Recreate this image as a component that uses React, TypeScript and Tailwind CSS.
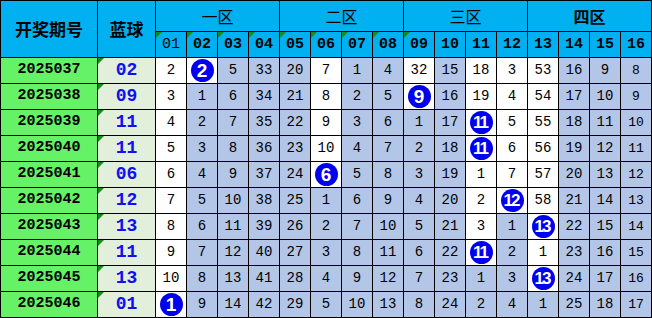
import React from "react";

type Cell = number | { b: number };

const rows: { id: string; blue: string; cells: Cell[] }[] = [
  { id: "2025037", blue: "02", cells: [2, { b: 2 }, 5, 33, 20, 7, 1, 4, 32, 15, 18, 3, 53, 16, 9, 8] },
  { id: "2025038", blue: "09", cells: [3, 1, 6, 34, 21, 8, 2, 5, { b: 9 }, 16, 19, 4, 54, 17, 10, 9] },
  { id: "2025039", blue: "11", cells: [4, 2, 7, 35, 22, 9, 3, 6, 1, 17, { b: 11 }, 5, 55, 18, 11, 10] },
  { id: "2025040", blue: "11", cells: [5, 3, 8, 36, 23, 10, 4, 7, 2, 18, { b: 11 }, 6, 56, 19, 12, 11] },
  { id: "2025041", blue: "06", cells: [6, 4, 9, 37, 24, { b: 6 }, 5, 8, 3, 19, 1, 7, 57, 20, 13, 12] },
  { id: "2025042", blue: "12", cells: [7, 5, 10, 38, 25, 1, 6, 9, 4, 20, 2, { b: 12 }, 58, 21, 14, 13] },
  { id: "2025043", blue: "13", cells: [8, 6, 11, 39, 26, 2, 7, 10, 5, 21, 3, 1, { b: 13 }, 22, 15, 14] },
  { id: "2025044", blue: "11", cells: [9, 7, 12, 40, 27, 3, 8, 11, 6, 22, { b: 11 }, 2, 1, 23, 16, 15] },
  { id: "2025045", blue: "13", cells: [10, 8, 13, 41, 28, 4, 9, 12, 7, 23, 1, 3, { b: 13 }, 24, 17, 16] },
  { id: "2025046", blue: "01", cells: [{ b: 1 }, 9, 14, 42, 29, 5, 10, 13, 8, 24, 2, 4, 1, 25, 18, 17] },
];

const lastBall: number[] = Array.from({ length: 16 }, (_, c) => {
  let last = -1;
  rows.forEach((r, i) => {
    if (typeof r.cells[c] === "object") last = i;
  });
  return last;
});

function Tri() {
  return (
    <span className="absolute left-0 top-0 h-0 w-0 border-r-[6px] border-t-[6px] border-r-transparent border-t-[#198c19]" />
  );
}

function Ball({ n }: { n: number }) {
  const two = n >= 10;
  return (
    <div
      className={
        "flex h-[23px] w-[23px] items-center justify-center rounded-full bg-[#0000f0] font-['Liberation_Sans',Arial,sans-serif] font-bold leading-none text-white " +
        (two ? "pr-[2px] text-[17px] tracking-[-2px]" : "text-[19px]")
      }
    >
      {n}
    </div>
  );
}

export default function App() {
  const zones = ["一区", "二区", "三区", "四区"];
  return (
    <div className="h-[318px] w-[652px] overflow-hidden bg-white">
      <div className="grid grid-cols-[96px_57px_repeat(16,30px)] grid-rows-[30px_25px_repeat(10,25px)] gap-px bg-black p-px">
        <div className="row-span-2 flex items-center justify-center bg-[#00b0f0] font-['Noto_Sans_CJK_SC','Noto_Sans',sans-serif] text-[17px] font-bold text-black">
          开奖期号
        </div>
        <div className="row-span-2 flex items-center justify-center bg-[#00b0f0] font-['Noto_Sans_CJK_SC','Noto_Sans',sans-serif] text-[17px] font-bold text-black">
          蓝球
        </div>
        {zones.map((z, i) => (
          <div
            key={z}
            className={
              "col-span-4 flex items-center justify-center bg-[#00b0f0] font-['Noto_Sans_CJK_SC','Noto_Sans',sans-serif] text-[16px] text-black " +
              (i === 3 ? "font-bold" : "font-normal")
            }
          >
            {z}
          </div>
        ))}
        {Array.from({ length: 16 }, (_, i) => {
          const label = String(i + 1).padStart(2, "0");
          return (
            <div
              key={label}
              className={
                "relative flex items-center justify-center bg-[#00b0f0] pt-px font-['Liberation_Mono','DejaVu_Sans_Mono',monospace] text-[15px] text-black " +
                (i === 0 ? "font-normal" : "font-bold")
              }
            >
              {i < 9 && <Tri />}
              {label}
            </div>
          );
        })}
        {rows.map((r, ri) => (
          <React.Fragment key={r.id}>
            <div className="flex items-center justify-center bg-[#66f266] font-['Liberation_Mono','DejaVu_Sans_Mono',monospace] text-[15px] font-bold text-black">
              {r.id}
            </div>
            <div className="relative flex items-center justify-center bg-[#e2efda] font-['Liberation_Mono','DejaVu_Sans_Mono',monospace] text-[18px] font-bold text-[#1010f0]">
              <Tri />
              {r.blue}
            </div>
            {r.cells.map((c, ci) => {
              const white = ri <= lastBall[ci];
              return (
                <div
                  key={ci}
                  className={
                    "flex items-center justify-center font-['Liberation_Mono','DejaVu_Sans_Mono',monospace] text-black " +
                    (white ? "bg-white " : "bg-[#b4c6e7] ") +
                    (ci === 15 ? "text-[13px] font-medium" : "text-[14px]")
                  }
                >
                  {typeof c === "object" ? <Ball n={c.b} /> : c}
                </div>
              );
            })}
          </React.Fragment>
        ))}
      </div>
    </div>
  );
}
